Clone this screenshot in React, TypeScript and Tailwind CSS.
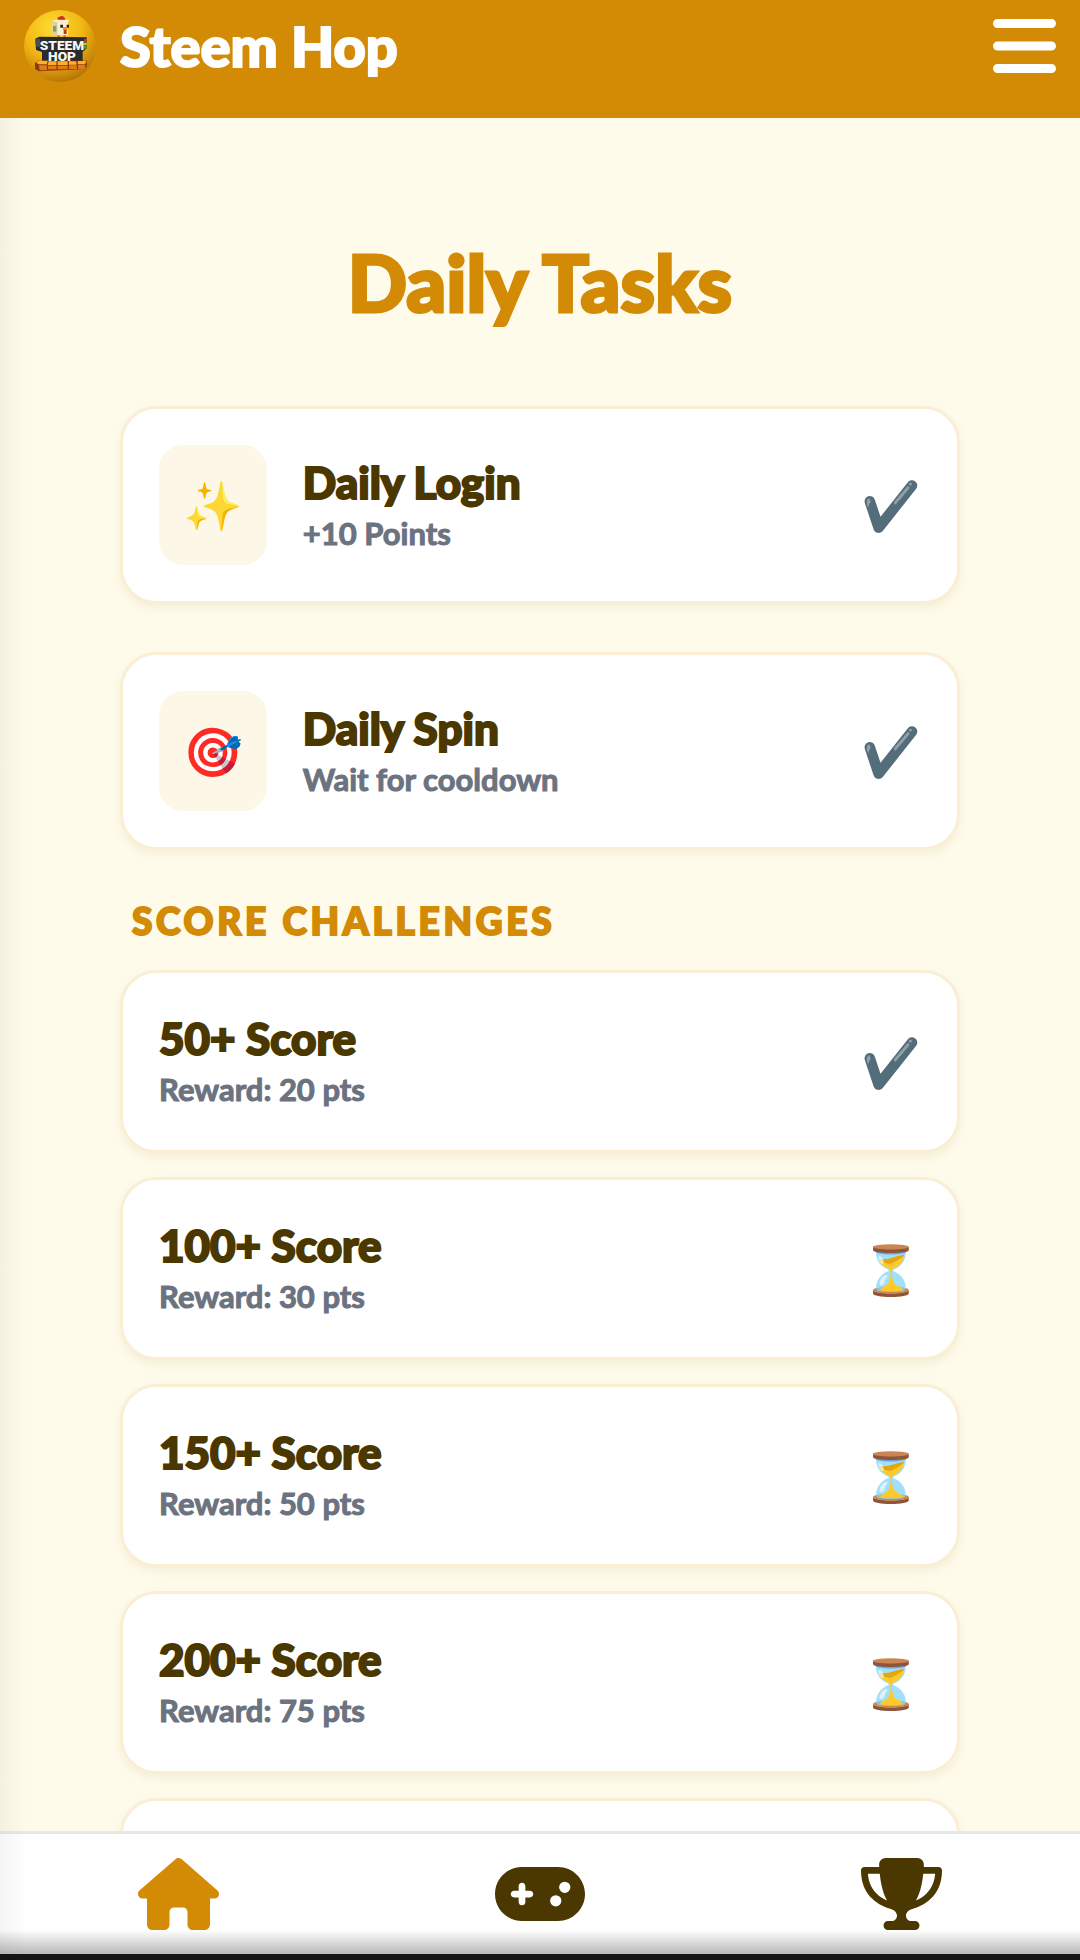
import { FaBars, FaGamepad, FaHouse, FaTrophy } from "react-icons/fa6";

const dailyTasks = [
  { icon: "✨", title: "Daily Login", detail: "+10 Points", status: "✔️" },
  { icon: "🎯", title: "Daily Spin", detail: "Wait for cooldown", status: "✔️" },
];

const challenges = [
  { title: "50+ Score", detail: "Reward: 20 pts", status: "✔️" },
  { title: "100+ Score", detail: "Reward: 30 pts", status: "⏳" },
  { title: "150+ Score", detail: "Reward: 50 pts", status: "⏳" },
  { title: "200+ Score", detail: "Reward: 75 pts", status: "⏳" },
];

const cardClass =
  "flex items-center rounded-[36px] border-3 border-[#faefd5] bg-white p-9 shadow-[0_4px_8px_rgba(120,90,0,0.08)]";

function Logo() {
  return (
    <svg viewBox="12 12 216 216" className="size-18 shrink-0" role="img" aria-label="Steem Hop logo">
      <defs>
        <radialGradient id="ball" cx="0.4" cy="0.25" r="0.8">
          <stop offset="0" stopColor="#ffdc30" />
          <stop offset="0.5" stopColor="#f2b814" />
          <stop offset="0.85" stopColor="#c98708" />
          <stop offset="1" stopColor="#a86c06" />
        </radialGradient>
      </defs>
      <circle cx="120" cy="120" r="108" fill="url(#ball)" />
      <path d="M113 34h6v-3h12v4h4v10h-22z" fill="#cf2a17" />
      <path d="M97 46l10-5h42l-5 6v41h-42l-5-5z" fill="#f8efcf" />
      <path d="M97 46l15 3v40l-10-1-5-5z" fill="#d9cfa4" />
      <path d="M99 60h10v17h-10z" fill="#86a552" />
      <path d="M121 56h8v9h-8zM140 56h7v9h-7z" fill="#2b1d10" />
      <path d="M129 63h13v9h-13z" fill="#ef8b16" />
      <path d="M131 72h9v12h-9z" fill="#cc3215" />
      <path d="M112 88h8v10h-8zM130 88h8v10h-8z" fill="#dd7c0d" />
      <path d="M46 98l12-6 142 2v33l-12 10v34H66v-33l-18-6z" fill="#292b2c" />
      <path d="M46 98h14v24H48z" fill="#4a4f50" />
      <path d="M192 99h8v9h-8z" fill="#d7341d" />
      <path d="M192 110h8v8h-8z" fill="#e0c92a" />
      <path d="M192 120h8v8h-8z" fill="#49a53c" />
      <path d="M45 169l10-5h146l-1 18-13 8-131 6-11-7z" fill="#8d3d0c" />
      <path d="M46 168l14-4h23l-3 11H56zM86 166h23v11H83zM113 166h30v11h-30zM147 166h22v10h-22zM174 165h25l-4 10h-22z" fill="#ffae27" />
      <path d="M57 178h23l1 14-22 1zM84 179h25v11H84zM113 179h30v11h-30zM147 178h23l1 11h-24zM174 177h21v9l-9 4h-11z" fill="#e27a16" />
      <g fill="#f8f8f2" fontFamily="Roboto, sans-serif" fontWeight="900" textAnchor="middle">
        <text x="126" y="132" fontSize="41">STEEM</text>
        <text x="126" y="166" fontSize="41">HOP</text>
      </g>
    </svg>
  );
}

function TaskText({ title, detail }: { title: string; detail: string }) {
  return (
    <div className="min-w-0 flex-1">
      <h3 className="text-[44px] leading-[58px] font-black text-[#4a3800] [-webkit-text-stroke:2px_#4a3800]">
        {title}
      </h3>
      <p className="pb-0.5 text-[31px] leading-[45px] font-bold text-[#6b7280] [-webkit-text-stroke:1px_#6b7280]">
        {detail}
      </p>
    </div>
  );
}

function Status({ symbol }: { symbol: string }) {
  return <span className="shrink-0 text-5xl leading-[72px]">{symbol}</span>;
}

export default function App() {
  return (
    <div className="relative flex h-screen flex-col overflow-hidden bg-[#fffbea] font-['Lato','Noto_Color_Emoji',sans-serif]">
      <header className="flex shrink-0 items-center justify-between bg-[#d38a05] px-6 pt-[10px] pb-9">
        <div className="flex items-center gap-6">
          <Logo />
          <span className="text-[56px] leading-[72px] font-black text-white [-webkit-text-stroke:2px_#ffffff]">
            Steem Hop
          </span>
        </div>
        <button type="button" aria-label="Open menu" className="text-white">
          <FaBars className="h-[72px] w-[63px]" />
        </button>
      </header>

      <main className="min-h-0 flex-1 overflow-y-auto px-[120px] pt-[116px] [scrollbar-width:none]">
        <h1 className="mb-[76px] text-center text-[78px] leading-[96px] font-black text-[#d38a05] [-webkit-text-stroke:3px_#d38a05]">
          Daily Tasks
        </h1>

        <section aria-label="Daily tasks" className="flex flex-col gap-12">
          {dailyTasks.map((task) => (
            <article key={task.title} className={cardClass}>
              <span className="mr-9 shrink-0 rounded-3xl bg-[#fdf7e7] p-6 text-5xl leading-[72px]">{task.icon}</span>
              <TaskText title={task.title} detail={task.detail} />
              <Status symbol={task.status} />
            </article>
          ))}
        </section>

        <h2 className="mt-11 mb-[22px] pl-3 text-[37px] leading-[54px] font-black tracking-widest text-[#d38a05] uppercase [-webkit-text-stroke:2px_#d38a05]">
          Score Challenges
        </h2>

        <section aria-label="Score challenges" className="flex flex-col gap-6">
          {challenges.map((task) => (
            <article key={task.title} className={cardClass}>
              <TaskText title={task.title} detail={task.detail} />
              <Status symbol={task.status} />
            </article>
          ))}
          <article aria-label="Next challenge" className={cardClass}>
            <div className="h-[105px]" />
          </article>
        </section>
      </main>

      <nav
        aria-label="Main"
        className="flex shrink-0 justify-around border-t-3 border-[#e5e7eb] bg-linear-to-t from-[#b9b9b9] via-white via-20% to-white pt-6 pb-6 text-[#4a3800]"
      >
        <a href="#home" aria-label="Home" className="text-[#d38a05]">
          <FaHouse className="h-[72px] w-[81px]" />
        </a>
        <a href="#play" aria-label="Play">
          <FaGamepad className="h-[72px] w-[90px]" />
        </a>
        <a href="#leaderboard" aria-label="Leaderboard">
          <FaTrophy className="h-[72px] w-[81px]" />
        </a>
      </nav>
      <div className="h-1.5 shrink-0 bg-[#141414]" />
      <div className="pointer-events-none absolute top-[118px] bottom-1.5 left-0 w-7 bg-linear-to-r from-black/4 to-transparent" />
    </div>
  );
}
